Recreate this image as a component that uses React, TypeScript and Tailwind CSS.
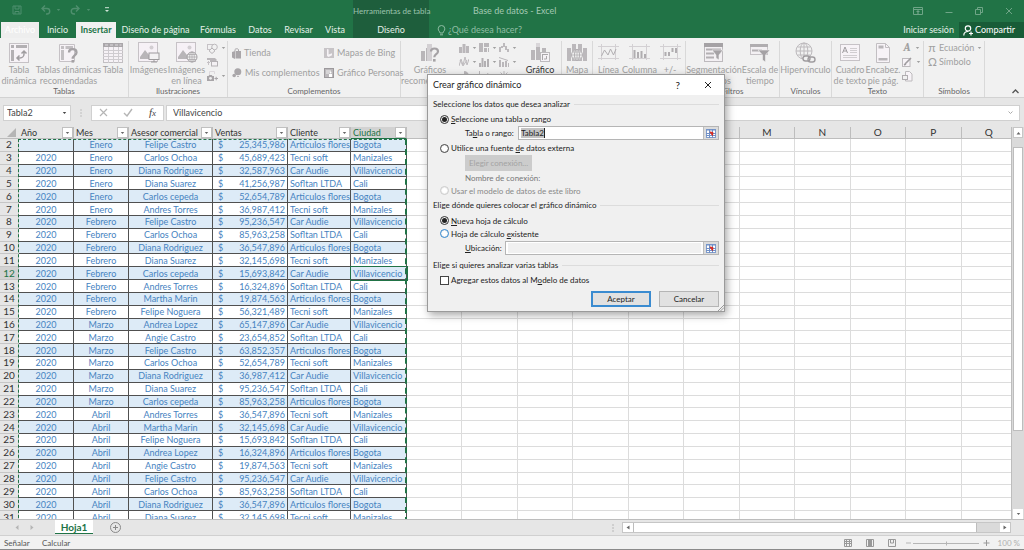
import type { ReactNode } from 'react';
import clsx from 'clsx';

const names = ['Año', 'Mes', 'Asesor comercial', 'Ventas', 'Cliente', 'Ciudad'];

const rows = [
  ['', 'Enero', 'Felipe Castro', '25,345,986', 'Articulos flores', 'Bogota'],
  ['2020', 'Enero', 'Carlos Ochoa', '45,689,423', 'Tecni soft', 'Manizales'],
  ['2020', 'Enero', 'Diana Rodriguez', '32,587,963', 'Car Audie', 'Villavicencio'],
  ['2020', 'Enero', 'Diana Suarez', '41,256,987', 'Sofltan LTDA', 'Cali'],
  ['2020', 'Enero', 'Carlos cepeda', '52,654,789', 'Articulos flores', 'Bogota'],
  ['2020', 'Enero', 'Andres Torres', '36,987,412', 'Tecni soft', 'Manizales'],
  ['2020', 'Febrero', 'Felipe Castro', '95,236,547', 'Car Audie', 'Villavicencio'],
  ['2020', 'Febrero', 'Carlos Ochoa', '85,963,258', 'Sofltan LTDA', 'Cali'],
  ['2020', 'Febrero', 'Diana Rodriguez', '36,547,896', 'Articulos flores', 'Bogota'],
  ['2020', 'Febrero', 'Diana Suarez', '32,145,698', 'Tecni soft', 'Manizales'],
  ['2020', 'Febrero', 'Carlos cepeda', '15,693,842', 'Car Audie', 'Villavicencio'],
  ['2020', 'Febrero', 'Andres Torres', '16,324,896', 'Sofltan LTDA', 'Cali'],
  ['2020', 'Febrero', 'Martha Marin', '19,874,563', 'Articulos flores', 'Bogota'],
  ['2020', 'Febrero', 'Felipe Noguera', '56,321,489', 'Tecni soft', 'Manizales'],
  ['2020', 'Marzo', 'Andrea Lopez', '65,147,896', 'Car Audie', 'Villavicencio'],
  ['2020', 'Marzo', 'Angie Castro', '23,654,852', 'Sofltan LTDA', 'Cali'],
  ['2020', 'Marzo', 'Felipe Castro', '63,852,357', 'Articulos flores', 'Bogota'],
  ['2020', 'Marzo', 'Carlos Ochoa', '52,654,789', 'Tecni soft', 'Manizales'],
  ['2020', 'Marzo', 'Diana Rodriguez', '36,987,412', 'Car Audie', 'Villavicencio'],
  ['2020', 'Marzo', 'Diana Suarez', '95,236,547', 'Sofltan LTDA', 'Cali'],
  ['2020', 'Marzo', 'Carlos cepeda', '85,963,258', 'Articulos flores', 'Bogota'],
  ['2020', 'Abril', 'Andres Torres', '36,547,896', 'Tecni soft', 'Manizales'],
  ['2020', 'Abril', 'Martha Marin', '32,145,698', 'Car Audie', 'Villavicencio'],
  ['2020', 'Abril', 'Felipe Noguera', '15,693,842', 'Sofltan LTDA', 'Cali'],
  ['2020', 'Abril', 'Andrea Lopez', '16,324,896', 'Articulos flores', 'Bogota'],
  ['2020', 'Abril', 'Angie Castro', '19,874,563', 'Tecni soft', 'Manizales'],
  ['2020', 'Abril', 'Felipe Castro', '95,236,547', 'Car Audie', 'Villavicencio'],
  ['2020', 'Abril', 'Carlos Ochoa', '85,963,258', 'Sofltan LTDA', 'Cali'],
  ['2020', 'Abril', 'Diana Rodriguez', '36,547,896', 'Articulos flores', 'Bogota'],
  ['2020', 'Abril', 'Diana Suarez', '32,145,698', 'Tecni soft', 'Manizales'],
];

const extraCols = ['G', 'H', 'I', 'J', 'K', 'L', 'M', 'N', 'O', 'P', 'Q'];

const Svg = ({ w, h, children }: { w: number; h: number; children: ReactNode }) => (
  <svg width={w} height={h} viewBox={`0 0 ${w} ${h}`} fill="none" stroke="currentColor" className="shrink-0" aria-hidden="true">
    {children}
  </svg>
);

const Caret = () => (
  <Svg w={5} h={4}>
    <path d="M0.8 1h3.4L2.5 3z" fill="currentColor" stroke="none" />
  </Svg>
);

/* ---------- ribbon icons ---------- */

const PivotIcon = () => (
  <Svg w={20} h={20}>
    <rect x="0.5" y="0.5" width="19" height="19" fill="#f6f2f6" stroke="#c6c2c6" />
    <path d="M2 2h3v3H2zM7 2h11v3H7zM2 7h3v11H2z" fill="#b3b0b3" stroke="none" />
    <path d="M8.5 15H11a4 4 0 0 0 4-4V8.500M10.500 12.500L8 15l2.500 2.500M12.500 10.500L15 8l2.500 2.500" stroke="#a09da0" strokeWidth="1.500" />
  </Svg>
);

const PivotHelpIcon = () => (
  <Svg w={20} h={20}>
    <path d="M0.500 1.500h15v17h-15z" fill="#f6f2f6" stroke="#c6c2c6" />
    <path d="M2 3h3v3H2zM6.500 3H14v3H6.500zM2 7h3v10H2z" fill="#c2bfc2" stroke="none" />
    <path d="M10 9.500c0-2 1.300-3.300 3.700-3.300s3.800 1.400 3.800 3.200c0 3-3.800 3-3.800 6.300" stroke="#a5a2a5" strokeWidth="2.300" />
    <rect x="12.500" y="17" width="2.600" height="2.600" fill="#a5a2a5" stroke="none" />
  </Svg>
);

const TableIcon = () => (
  <Svg w={20} h={20}>
    <rect x="0.500" y="0.500" width="19" height="19" fill="#f6f2f6" stroke="#c2bfc2" />
    <rect x="0" y="0" width="20" height="4" fill="#aaa7aa" stroke="none" />
    <path d="M2 2h3M7 2h3M12 2h3M16.500 2h2" stroke="#dedbde" />
    <path d="M0 7.500h20M0 10.500h20M0 13.500h20M0 16.500h20M5.500 4v16M10.500 4v16M15.500 4v16" stroke="#cfccd0" />
  </Svg>
);

const PictureBase = () => (
  <>
    <rect x="0.500" y="0.500" width="19" height="19" fill="#f6f1f6" stroke="#c6c2c6" />
    <circle cx="13.500" cy="5.500" r="2" fill="#d2ced2" stroke="none" />
    <path d="M2 15l5-7 4 5 2-2 3 4v2H2z" fill="#b8b5b8" stroke="none" />
  </>
);

const PictureIcon = () => (
  <Svg w={22} h={21}>
    <PictureBase />
    <rect x="11" y="11" width="10" height="6.500" fill="#f3f1f3" stroke="#9d9a9d" />
    <path d="M16 17.500V20M13 20h6" stroke="#9d9a9d" />
  </Svg>
);

const OnlinePictureIcon = () => (
  <Svg w={22} h={21}>
    <PictureBase />
    <circle cx="16" cy="15" r="5" fill="#f1f1f1" stroke="#a5a2a5" />
    <path d="M11 15h10M16 10v10M12 12.500h8M12 17.500h8" stroke="#a5a2a5" strokeWidth="0.700" />
    <ellipse cx="16" cy="15" rx="2.300" ry="5" stroke="#a5a2a5" strokeWidth="0.700" />
  </Svg>
);

const ShapesIcon = () => (
  <Svg w={11} h={11}>
    <rect x="0.500" y="1.500" width="5.500" height="5" stroke="#c6c2c6" />
    <circle cx="7.500" cy="4" r="2.800" fill="#f1f1f1" stroke="#bdbabd" />
    <path d="M5 5l3 2.800L5 10.500 2 7.800z" fill="#f1f1f1" stroke="#b5b2b5" />
  </Svg>
);

const SmartArtIcon = () => (
  <Svg w={11} h={10}>
    <path d="M0 1h8l2 2-2 2H3V3H0z" fill="#bab7ba" stroke="none" />
    <rect x="4.500" y="4.500" width="6" height="4.500" fill="#f4f1f4" stroke="#b5b2b5" />
    <path d="M0 5.500h3M1.500 4v4" stroke="#c6c2c6" />
  </Svg>
);

const ScreenshotIcon = () => (
  <Svg w={11} h={11}>
    <path d="M2.500 4V0.500h5V3" stroke="#ddd9dd" />
    <path d="M0 5h1.500l0.800-1h2.400l0.800 1H7v5H0z" fill="#a8a5a8" stroke="none" />
    <circle cx="3.500" cy="7.300" r="1.400" fill="#eee" stroke="none" />
    <path d="M7.500 7.500h3.500M9.200 5.800v3.500" stroke="#a8a5a8" />
  </Svg>
);

const StoreIcon = () => (
  <Svg w={9} h={11}>
    <path d="M0 4l3-1v8L0 9.500zM3.500 3H9v7.500H3.500z" fill="#a9a6a9" stroke="none" />
    <path d="M3 3V1.500C3.500 0.500 6 0.500 6.500 1.500V3" stroke="#a9a6a9" />
  </Svg>
);

const AddinsIcon = () => (
  <Svg w={10} h={10}>
    <circle cx="5.800" cy="3.700" r="3.500" fill="#a9a6a9" stroke="none" />
    <circle cx="2.200" cy="7.500" r="1.800" fill="#a9a6a9" stroke="none" />
    <path d="M5 8.500h2" stroke="#b9b6b9" />
  </Svg>
);

const BingIcon = () => (
  <Svg w={10} h={10}>
    <rect width="10" height="10" fill="#c7c4c7" stroke="none" />
    <path d="M3 1l1.600 0.600v5L8 5.200v2L4.600 9 3 8z" fill="#f6f3f6" stroke="none" />
  </Svg>
);

const PeopleGraphIcon = () => (
  <Svg w={10} h={10}>
    <rect x="0.500" y="0.500" width="9" height="9" fill="#bbb8bb" stroke="#9c999c" />
    <path d="M2 3h5M2 5h3" stroke="#f1f1f1" />
    <circle cx="6.500" cy="4.500" r="1" fill="#fff" stroke="none" />
    <path d="M5 6h3v3H5z" fill="#fff" stroke="none" />
  </Svg>
);

const ChartHelpIcon = () => (
  <Svg w={20} h={20}>
    <path d="M1 8h4v10H1zM6 5h5v13H6z" fill="#b9b6b9" stroke="none" />
    <path d="M7 1h5v17H7z" fill="#d3d0d3" stroke="none" />
    <path d="M11 8.500c0-2 1.300-3 3.500-3s3.500 1.200 3.500 2.900c0 2.800-3.700 2.800-3.700 5.800" stroke="#a5a2a5" strokeWidth="2.200" />
    <rect x="13" y="16" width="2.600" height="2.600" fill="#a5a2a5" stroke="none" />
  </Svg>
);

const PivotChartIcon = () => (
  <Svg w={21} h={21}>
    <path d="M1 8h4v10H1zM6 5h4v13H6zM12 6h4v5h-4z" fill="#b9b6b9" stroke="none" />
    <path d="M6 1h4v4H6z" fill="#d9d6d9" stroke="none" />
    <rect x="10.500" y="10.500" width="9" height="9" fill="#f6f2f6" stroke="#bdbabd" />
    <path d="M12 12.500h6M12.500 12v6" stroke="#aaa7aa" />
    <path d="M14 17h2.500v-3" stroke="#aaa7aa" />
  </Svg>
);

const MapIcon = () => (
  <Svg w={20} h={20}>
    <path d="M0 5h4v13H0zM5 1h4v17H5zM11 1h4v17h-4zM16 5h4v13h-4z" fill="#bbb8bb" stroke="none" />
    <circle cx="10" cy="12" r="5.500" fill="#f1f1f1" stroke="#b3b0b3" />
    <ellipse cx="10" cy="12" rx="2.500" ry="5.500" stroke="#b3b0b3" />
    <path d="M4.500 12h11M10 6.500v11M5.500 9h9M5.500 15h9" stroke="#b3b0b3" strokeWidth="0.800" />
  </Svg>
);

const Spark = ({ children }: { children: ReactNode }) => (
  <Svg w={21} h={18}>
    <path d="M3.500 0v16M17.500 0v16M0 2.500h21M0 14.500h21" stroke="#d3d0d3" />
    {children}
  </Svg>
);

const SparkLineIcon = () => (
  <Spark>
    <path d="M3.500 12l3-6 3.500 5 2.500-6 3 6 2.500-6" stroke="#b0adb0" />
  </Spark>
);

const SparkColIcon = () => (
  <Spark>
    <path d="M4.500 6h2v8h-2zM8 8h2v6H8zM11.500 7h2v7h-2zM15 10h2v4h-2z" fill="#b0adb0" stroke="none" />
  </Spark>
);

const SparkWinIcon = () => (
  <Spark>
    <path d="M4.500 8h2v4h-2zM8 8h2v4H8zM11.500 4h2v4h-2zM15 4h2v5h-2z" fill="#b0adb0" stroke="none" />
  </Spark>
);

const SlicerIcon = () => (
  <Svg w={20} h={20}>
    <rect x="0.500" y="0.500" width="18" height="18" fill="#f3f0f3" stroke="#bdbabd" />
    <path d="M0 0h19v4H0z" fill="#a5a2a5" stroke="none" />
    <path d="M2 6.500h15M2 10.500h8M2 14.500h8" stroke="#b3b0b3" strokeWidth="2" />
    <path d="M8 7h11l-4 5v5l-3-2v-3z" fill="#a5a2a5" stroke="#f1f1f1" strokeWidth="0.600" />
  </Svg>
);

const TimelineIcon = () => (
  <Svg w={20} h={18}>
    <rect x="0.500" y="0.500" width="17" height="10" fill="#f3f0f3" stroke="#c6c2c6" />
    <path d="M0 0h18v3H0z" fill="#b0adb0" stroke="none" />
    <path d="M2 6.500h10" stroke="#b3b0b3" strokeWidth="2" />
    <path d="M8 6h12l-4.500 5v7l-3-2v-5z" fill="#a5a2a5" stroke="#f1f1f1" strokeWidth="0.600" />
  </Svg>
);

const LinkIcon = () => (
  <Svg w={21} h={21}>
    <circle cx="9" cy="9" r="8" stroke="#bdbabd" />
    <ellipse cx="9" cy="9" rx="3.800" ry="8" stroke="#bdbabd" />
    <path d="M1 9h16M9 1v16M2.500 5h13M2.500 13h13" stroke="#bdbabd" />
    <rect x="8" y="14" width="7" height="5" rx="2.500" fill="#f1f1f1" stroke="#a09da0" strokeWidth="1.400" />
    <rect x="13" y="15" width="7" height="5" rx="2.500" stroke="#a09da0" strokeWidth="1.400" />
  </Svg>
);

const TextBoxIcon = () => (
  <Svg w={20} h={19}>
    <rect x="0.500" y="1.500" width="19" height="16" fill="#f7f3f7" stroke="#c6c2c6" />
    <path d="M2.500 10L5 4l2.500 6M3.300 8h3.400" stroke="#a09da0" />
    <path d="M10 5.500h7M10 7.500h7M10 9.500h7M3 12.500h14M3 14.500h14" stroke="#d0cdd0" />
  </Svg>
);

const HeaderFooterIcon = () => (
  <Svg w={14} h={20}>
    <path d="M0.500 0.500h9l4 4v15H0.500z" fill="#f7f3f7" stroke="#c2bfc2" />
    <path d="M9.500 0.500v4h4" stroke="#c2bfc2" />
    <path d="M2.500 2.500h5v3h-5zM2.500 15h9v2.500h-9z" fill="#b9b6b9" stroke="none" />
  </Svg>
);

const SignatureIcon = () => (
  <Svg w={11} h={10}>
    <rect x="0.500" y="1.500" width="7.500" height="8" fill="#f7f3f7" stroke="#bdbabd" />
    <path d="M3 7l6-6M2 8l2-1" stroke="#a09da0" strokeWidth="1.600" />
  </Svg>
);

const ObjectIcon = () => (
  <Svg w={11} h={11}>
    <path d="M3.500 0.500h4l2.500 2.500v7H3.500z" fill="#f7f3f7" stroke="#bdbabd" />
    <rect x="0.500" y="4.500" width="5" height="4" fill="#f1f1f1" stroke="#b0adb0" />
  </Svg>
);

const miniCharts: ReactNode[] = [
  <path d="M0 4h3v6H0zM3.500 1h3v9h-3zM7 3h3v7H7z" fill="#bab7ba" stroke="none" />,
  <path d="M0 0h4v9H0zM5 0h5v4H5zM5 5h3v4H5zM9 5h1v4H9z" fill="#bab7ba" stroke="none" />,
  <path d="M0 4h2v5H0zM2 3h2v2H2zM4 0h2v4H4zM6 3h2v4H6zM8 6h2v3H8z" fill="#bdbabd" stroke="none" />,
  <path d="M0 9l2-7 2 6 2-8 2 8 2-6M1 3l3 6 4-6" stroke="#bdbabd" />,
  <path d="M0 6h2v4H0zM2.500 1h2v9h-2zM5 4h2v6H5zM8 2h2v8H8z" fill="#b3b0b3" stroke="none" />,
  <path d="M0 3h2v7H0zM3 5h2v5H3zM6 4h2v6H6zM9 6h1v4H9zM0 0l9 3v1L0 1z" fill="#bab7ba" stroke="none" />,
  <path d="M5 5V0a5 5 0 1 1-5 5z" fill="#bab7ba" stroke="none" />,
  <path d="M0.500 0v9.500H10M3 7l2-3 2 2 2-4" stroke="#bdbabd" />,
  <path d="M5 0v10M0 5h10M1.500 1.500l7 7M8.500 1.500l-7 7" stroke="#bdbabd" />,
];

/* ---------- ribbon ---------- */

const BigButton = ({ icon, lines, className }: { icon: ReactNode; lines: string[]; className: string }) => (
  <button type="button" className={clsx('flex shrink-0 flex-col items-center text-[#a0a0a0]', className)}>
    <span className="flex h-[23px] items-center">{icon}</span>
    {lines.map((l) => (
      <span key={l} className="h-[11px] whitespace-nowrap leading-[11px]">{l}</span>
    ))}
  </button>
);

const SmallButton = ({ icon, label, caret }: { icon: ReactNode; label?: string; caret?: boolean }) => (
  <button type="button" aria-label={label ?? 'Opciones'} className="flex h-[14px] items-center gap-[3px] whitespace-nowrap text-[#a0a0a0]">
    {icon}
    {label}
    {caret && <Caret />}
  </button>
);

const Group = ({ title, className, children }: { title: string; className: string; children: ReactNode }) => (
  <div className={clsx('flex shrink-0 flex-col justify-between border-r border-[#d9d9d9]', className)}>
    <div className="flex h-[45px]">{children}</div>
    <div className="h-[11px] text-center text-[8px] leading-[11px] text-[#666]">{title}</div>
  </div>
);

const Ribbon = () => (
  <section className="flex h-[60px] shrink-0 overflow-hidden border-b border-[#d2d2d2] bg-[#f1f1f1] pt-[3px] text-[9px]">
    <Group title="Tablas" className="w-[129px]">
      <BigButton icon={<PivotIcon />} lines={['Tabla', 'dinámica']} className="w-[38px]" />
      <BigButton icon={<PivotHelpIcon />} lines={['Tablas dinámicas', 'recomendadas']} className="w-[61px]" />
      <BigButton icon={<TableIcon />} lines={['Tabla']} className="w-[28px]" />
    </Group>
    <Group title="Ilustraciones" className="w-[99px]">
      <BigButton icon={<PictureIcon />} lines={['Imágenes']} className="w-[39px]" />
      <BigButton icon={<OnlinePictureIcon />} lines={['Imágenes', 'en línea']} className="w-[37px]" />
      <div className="flex flex-col pl-[2px]">
        <SmallButton icon={<ShapesIcon />} caret />
        <SmallButton icon={<SmartArtIcon />} />
        <SmallButton icon={<ScreenshotIcon />} caret />
      </div>
    </Group>
    <Group title="Complementos" className="w-[173px]">
      <div className="flex w-[92px] flex-col gap-[6px] pt-[5px] pl-1">
        <SmallButton icon={<StoreIcon />} label="Tienda" />
        <SmallButton icon={<AddinsIcon />} label="Mis complementos" caret />
      </div>
      <div className="flex flex-col gap-[6px] pt-[5px] pl-[4px]">
        <SmallButton icon={<BingIcon />} label="Mapas de Bing" />
        <SmallButton icon={<PeopleGraphIcon />} label="Gráfico Personas" />
      </div>
    </Group>
    <Group title="Gráficos" className="w-[161px]">
      <BigButton icon={<ChartHelpIcon />} lines={['Gráficos', 'recomendados']} className="w-[58px]" />
      <div className="grid grid-cols-3 content-start gap-x-[2px]">
        {miniCharts.map((c, i) => (
          <SmallButton key={i} icon={<Svg w={10} h={10}>{c}</Svg>} caret />
        ))}
      </div>
      <button type="button" className="ml-1 flex w-[38px] flex-col items-center text-[#333]">
        <span className="flex h-[23px] items-center"><PivotChartIcon /></span>
        <span className="leading-[11px]">Gráfico</span>
      </button>
    </Group>
    <Group title="" className="w-[31px]">
      <BigButton icon={<MapIcon />} lines={['Mapa']} className="w-[30px]" />
    </Group>
    <Group title="Minigráficos" className="w-[93px]">
      <BigButton icon={<SparkLineIcon />} lines={['Línea']} className="w-[31px]" />
      <BigButton icon={<SparkColIcon />} lines={['Columna']} className="w-[31px]" />
      <BigButton icon={<SparkWinIcon />} lines={['+/-']} className="w-[30px]" />
    </Group>
    <Group title="Filtros" className="w-[94px]">
      <BigButton icon={<SlicerIcon />} lines={['Segmentación', 'de datos']} className="w-[56px]" />
      <BigButton icon={<TimelineIcon />} lines={['Escala de', 'tiempo']} className="w-[36px]" />
    </Group>
    <Group title="Vínculos" className="w-[52px]">
      <BigButton icon={<LinkIcon />} lines={['Hipervínculo']} className="w-[51px]" />
    </Group>
    <Group title="Texto" className="w-[92px]">
      <BigButton icon={<TextBoxIcon />} lines={['Cuadro', 'de texto']} className="w-[36px]" />
      <BigButton icon={<HeaderFooterIcon />} lines={['Encabez.', 'pie pág.']} className="w-[30px]" />
      <div className="flex flex-col pl-1">
        <SmallButton icon={<span className="w-[10px] font-serif text-[11px] font-bold italic">A</span>} caret />
        <SmallButton icon={<SignatureIcon />} caret />
        <SmallButton icon={<ObjectIcon />} />
      </div>
    </Group>
    <Group title="Símbolos" className="w-[61px]">
      <div className="flex flex-col pl-1">
        <SmallButton icon={<span className="w-2 text-[12px]">π</span>} label="Ecuación" caret />
        <SmallButton icon={<span className="w-2 text-[11px]">Ω</span>} label="Símbolo" />
      </div>
    </Group>
    <div className="flex flex-1 items-end justify-end pr-1 pb-[3px] text-[#555]">
      <button type="button" aria-label="Contraer la cinta">
        <Svg w={9} h={5}><path d="M1.500 4l3-3 3 3" strokeWidth="1.300" /></Svg>
      </button>
    </div>
  </section>
);

/* ---------- title bar and tabs ---------- */

const Tab = ({ label, className }: { label: string; className: string }) => (
  <button type="button" className={clsx('h-4 shrink-0 whitespace-nowrap text-center', className)}>{label}</button>
);

const Header = () => (
  <header className="flex h-[38px] shrink-0 bg-[#217346] text-[9px] text-[#e4f0e8]">
    <div className="flex w-[353px] shrink-0 flex-col justify-between">
      <div className="flex h-5 items-center text-[#4f8f6e]">
        <button type="button" aria-label="Guardar" className="ml-3">
          <Svg w={10} h={10}><path d="M1 1h8v8H1zM3 1v3h4V1M3 9V6.500h4V9" /></Svg>
        </button>
        <button type="button" aria-label="Deshacer" className="ml-[19px] flex items-center gap-[5px]">
          <Svg w={10} h={10}><path d="M4 0.500L1 3.500l3 3M1 3.500h5a2.700 2.700 0 0 1 0 5.500H5" strokeWidth="1.400" /></Svg>
          <Caret />
        </button>
        <button type="button" aria-label="Rehacer" className="ml-[9px] flex items-center gap-[6px]">
          <Svg w={10} h={10}><path d="M6 0.500l3 3-3 3M9 3.500H4A2.700 2.700 0 0 0 4 9h1" strokeWidth="1.400" /></Svg>
          <Caret />
        </button>
        <button type="button" aria-label="Personalizar" className="ml-[13px] text-[#cfe3d7]">
          <Svg w={6} h={6}><path d="M1 0.700h4" /><path d="M1 3h4L3 5z" fill="currentColor" stroke="none" /></Svg>
        </button>
      </div>
      <nav className="flex items-end">
        <Tab label="Archivo" className="ml-px w-[38px] bg-[#eeeeee] text-white" />
        <Tab label="Inicio" className="w-[37px]" />
        <Tab label="Insertar" className="w-[40px] bg-[#f1f1f1] font-bold text-[#217346]" />
        <Tab label="Diseño de página" className="w-[79px]" />
        <Tab label="Fórmulas" className="w-[46px]" />
        <Tab label="Datos" className="w-[38px]" />
        <Tab label="Revisar" className="w-[39px]" />
        <Tab label="Vista" className="w-[34px]" />
      </nav>
    </div>
    <div className="flex w-[76px] shrink-0 flex-col justify-between bg-[#1e5e3c] text-center">
      <div className="h-[22px] whitespace-nowrap text-[8px] leading-[23px] text-[#9cc3ad]">Herramientas de tabla</div>
      <Tab label="Diseño" className="w-full" />
    </div>
    <div className="flex flex-1 flex-col justify-between">
      <div className="flex h-[22px] items-center justify-between pr-[11px] pl-11 text-[#a3c9b3]">
        <h1>Base de datos - Excel</h1>
        <div className="flex items-center gap-[22px] text-[#6fa587]">
          <button type="button" aria-label="Opciones de cinta">
            <Svg w={10} h={8}><path d="M0.500 0.500h9v7h-9zM1 2.500h8" /><path d="M5 3l2 2H5.600v2H4.400V5H3z" fill="currentColor" stroke="none" /></Svg>
          </button>
          <button type="button" aria-label="Minimizar"><Svg w={8} h={8}><path d="M0.500 5.500h7" /></Svg></button>
          <button type="button" aria-label="Restaurar"><Svg w={8} h={8}><path d="M0.500 2.500h5v5h-5zM2.500 2V0.500h5v5H6" /></Svg></button>
          <button type="button" aria-label="Cerrar"><Svg w={8} h={8}><path d="M1 1l6 6M7 1L1 7" /></Svg></button>
        </div>
      </div>
      <div className="flex items-center justify-between pl-2">
        <label className="flex items-center gap-[2px] text-[#8fbda3]">
          <Svg w={9} h={11}><path d="M3 8C3 6.500 1.200 6 1.200 3.800a3.300 3.300 0 0 1 6.600 0C7.800 6 6 6.500 6 8zM3 9.800h3" /></Svg>
          <input aria-label="¿Qué desea hacer?" placeholder="¿Qué desea hacer?" className="w-24 bg-transparent outline-none placeholder:text-[#8fbda3]" />
        </label>
        <div className="flex items-center gap-[5px]">
          <button type="button">Iniciar sesión</button>
          <button type="button" className="flex h-4 w-[65px] items-center gap-[2px] bg-[#185c37] pl-1 text-white">
            <Svg w={10} h={11}><circle cx="5" cy="3.500" r="2.700" strokeWidth="1.200" /><path d="M0.800 10.500c0-3 2-4 4.200-4M6 8.500h4M8 6.500v4" strokeWidth="1.200" /></Svg>
            Compartir
          </button>
        </div>
      </div>
    </div>
  </header>
);

/* ---------- formula bar ---------- */

const FormulaBar = () => (
  <section className="flex h-[29px] shrink-0 items-center pr-1 pl-[3px] text-[9px] text-[#444]">
    <div className="flex h-4 w-[68px] items-center justify-between border border-[#d0d0d0] bg-white px-[3px]">
      <input aria-label="Cuadro de nombres" defaultValue="Tabla2" className="w-12 outline-none" />
      <button type="button" aria-label="Nombres"><Caret /></button>
    </div>
    <div className="flex w-5 justify-center text-[#999]">
      <Svg w={2} h={8}><path d="M1 0.500v7" strokeDasharray="1 2" /></Svg>
    </div>
    <div className="flex h-4 w-[73px] items-center justify-between border border-[#d0d0d0] bg-white px-[7px]">
      <button type="button" aria-label="Cancelar entrada" className="text-[#b5b5b5]"><Svg w={9} h={9}><path d="M1 1l7 7M8 1L1 8" strokeWidth="1.200" /></Svg></button>
      <button type="button" aria-label="Introducir" className="text-[#b5b5b5]"><Svg w={10} h={9}><path d="M1 5l3 3 5-7" strokeWidth="1.400" /></Svg></button>
      <button type="button" aria-label="Insertar función" className="font-['Liberation_Serif',serif] text-[11px] italic">
        f<span className="text-[9px]">x</span>
      </button>
    </div>
    <div className="ml-[2px] flex h-4 flex-1 items-center justify-between border border-[#d0d0d0] bg-white px-[6px]">
      <input aria-label="Barra de fórmulas" defaultValue="Villavicencio" className="flex-1 outline-none" />
      <Svg w={5} h={4}><path d="M0.500 0.500l2 2 2-2" stroke="#aaa" /></Svg>
    </div>
  </section>
);

/* ---------- worksheet ---------- */

const Sheet = () => (
  <div className="relative min-w-0 flex-1 overflow-hidden border-r border-[#bdbdbd] bg-white">
    <table className="h-[397px] w-[1017px] table-fixed border-separate border-spacing-0 text-[9px] leading-[11px] text-[#4683c1]">
      <colgroup>
        <col className="w-[19px]" />
        <col className="w-[55px]" />
        <col className="w-[55px]" />
        <col className="w-[84px]" />
        <col className="w-[75px]" />
        <col className="w-[63px]" />
        <col className="w-[56px]" />
        {extraCols.map((c) => <col key={c} />)}
      </colgroup>
      <thead>
        <tr className="h-3 bg-[#e6e6e6] text-[10px] text-[#333]">
          <th aria-label="Seleccionar todo" className="border-b border-[#bdbdbd] p-0">
            <span className="flex justify-end pr-[3px] text-[#b5b5b5]"><Svg w={9} h={9}><path d="M9 0v9H0z" fill="currentColor" stroke="none" /></Svg></span>
          </th>
          {names.map((n) => (
            <th key={n} className={clsx('border-r border-b p-0 text-left text-[9px] font-normal', n === 'Ciudad' ? 'border-[#217346] border-r-[#bdbdbd] bg-[#d2d2d2] text-[#217346]' : 'border-[#bdbdbd]')}>
              <span className="flex h-[11px] items-center justify-between pl-[2px]">
                <span className="whitespace-nowrap">{n}</span>
                <button type="button" aria-label={`Filtrar ${n}`} className="flex h-[11px] w-[11px] shrink-0 items-center justify-center border border-[#c0c0c0] bg-white text-[#666]"><Caret /></button>
              </span>
            </th>
          ))}
          {extraCols.map((c) => (
            <th key={c} className="border-r border-b border-[#bdbdbd] p-0 text-center font-normal">{c}</th>
          ))}
        </tr>
      </thead>
      <tbody>
        {rows.map((r, i) => (
          <tr key={i} className="h-3">
            <th className={clsx('border-r border-b border-[#c6c6c6] p-0 text-center text-[10px] font-normal', i === 10 ? 'bg-[#d2d2d2] text-[#217346]' : 'bg-[#e6e6e6] text-[#333]')}>{i + 2}</th>
            {r.map((v, j) => (
              <td
                key={j}
                className={clsx(
                  'whitespace-nowrap border-r border-b border-[#505050] px-[2px] py-0',
                  j < 3 && 'text-center',
                  i % 2 === 0 && 'bg-[#ddebf7]',
                  i === 10 && j === 5 && 'outline outline-[#217346]',
                )}
              >
                {j === 3 ? <span className="flex justify-between pl-[3px]"><span>$</span><span>{v}</span></span> : v}
              </td>
            ))}
            {extraCols.map((c) => <td key={c} className="border-r border-b border-[#dcdcdc] p-0" />)}
          </tr>
        ))}
      </tbody>
    </table>
    {/* copy marquee round the source table */}
    <div className="pointer-events-none absolute top-3 -bottom-1 left-[18px] w-[389px] border border-r-2 border-dashed border-[#217346]" />
  </div>
);

const VScroll = () => (
  <div className="flex w-3 shrink-0 flex-col bg-[#dadada] px-px text-[#666]">
    <button type="button" aria-label="Arriba" className="flex h-[11px] items-center justify-center border border-[#c6c6c6] bg-white"><Svg w={5} h={4}><path d="M0.500 3.500h4L2.500 1z" fill="currentColor" stroke="none" /></Svg></button>
    <div className="mt-[9px] h-[284px] border border-[#bdbdbd] bg-white" />
    <button type="button" aria-label="Abajo" className="mt-auto flex h-[10px] items-center justify-center bg-white"><Caret /></button>
  </div>
);

const SheetTabs = () => (
  <div className="flex h-4 shrink-0 items-start border-t border-[#bdbdbd] text-[#888]">
    <div className="flex w-[55px] items-center gap-[11px] pt-[5px] pl-[15px] text-[#b5b5b5]">
      <Svg w={4} h={5}><path d="M3.500 0v5L0.500 2.500z" fill="currentColor" stroke="none" /></Svg>
      <Svg w={4} h={5}><path d="M0.500 0v5l3-2.500z" fill="currentColor" stroke="none" /></Svg>
    </div>
    <button type="button" className="h-[14px] w-[38px] border-b border-[#217346] bg-white text-[10px] leading-3 font-bold text-[#217346]">Hoja1</button>
    <button type="button" aria-label="Hoja nueva" className="mt-[2px] ml-[17px]">
      <Svg w={11} h={11}><circle cx="5.500" cy="5.500" r="5" /><path d="M3 5.500h5M5.500 3v5" /></Svg>
    </button>
    <div className="ml-auto flex items-center pt-[2px] pr-[13px]">
      <Svg w={2} h={8}><path d="M1 0.500v7" strokeDasharray="1 2" /></Svg>
      <div className="ml-2 flex h-[11px] w-[389px] border border-[#c6c6c6] bg-[#dadada]">
        <button type="button" aria-label="Izquierda" className="flex w-[10px] items-center justify-center bg-white text-[#666]"><Svg w={4} h={5}><path d="M3.500 0.500v4l-3-2z" fill="currentColor" stroke="none" /></Svg></button>
        <div className="w-[344px] border-x border-[#bdbdbd] bg-white" />
        <button type="button" aria-label="Derecha" className="ml-auto flex w-[10px] items-center justify-center bg-white text-[#666]"><Svg w={4} h={5}><path d="M0.500 0.500v4l3-2z" fill="currentColor" stroke="none" /></Svg></button>
      </div>
    </div>
  </div>
);

const StatusBar = () => (
  <footer className="flex h-[15px] shrink-0 items-center border-t border-b border-t-[#d0d0d0] border-b-[#8a8a8a] bg-[#f1f1f1] pr-1 pl-1 text-[8px] text-[#555]">
    <span className="w-[38px]">Señalar</span>
    <span>Calcular</span>
    <div className="ml-auto flex items-center text-[#999]">
      <Svg w={8} h={8}><path d="M0.500 0.500h7v7h-7zM0 2.500h8M0 4.500h8M2.500 0v8M5.500 0v8" /></Svg>
      <span className="w-[14px]" />
      <Svg w={8} h={8}><path d="M0.500 0.500h7v7h-7z" /><path d="M2 1h4v6H2z" fill="currentColor" stroke="none" /></Svg>
      <span className="w-[14px]" />
      <Svg w={8} h={8}><path d="M0.500 0.500h7v7h-7zM2.500 0v4M5.500 0v4H2.500" /></Svg>
      <span className="w-[10px]" />
      <Svg w={77} h={8}><path d="M0 4h5M7 4.500h66M40.500 2.500v4" stroke="#b5b5b5" /></Svg>
      <Svg w={7} h={8}><path d="M0.500 4h6M3.500 1v6" /></Svg>
      <span className="ml-2 text-[#b0b0b0]">100 %</span>
    </div>
  </footer>
);

/* ---------- dialog ---------- */

const Section = ({ children }: { children: ReactNode }) => (
  <div className="flex h-[18px] items-center gap-1">
    <span>{children}</span>
    <span className="h-px flex-1 bg-[#dcdcdc]" />
  </div>
);

const radioClass =
  'h-[9px] w-[9px] shrink-0 appearance-none rounded-full border bg-white bg-clip-content p-px checked:bg-[#222]';

const RangeButton = () => (
  <button type="button" aria-label="Contraer diálogo" className="flex h-full w-[15px] items-center justify-center border-l border-[#bdbdbd] bg-[#dcdcdc]">
    <Svg w={10} h={9}>
      <rect x="0.500" y="0.500" width="9" height="8" fill="#fff" stroke="#7f9ccc" />
      <path d="M0 1h10M0 4.500h10M0 6.500h10M3.500 0v9M6.500 0v9" stroke="#6f8fc6" />
      <path d="M4 3l3 0.500-0.500 3z" fill="#d6281e" stroke="#d6281e" />
    </Svg>
  </button>
);

const Dialog = () => (
  <div role="dialog" aria-label="Crear gráfico dinámico" className="absolute top-[74px] left-[427px] w-[298px] border border-[#9a9a9a] bg-[#f0f0f0] text-[8px] leading-[10px] whitespace-nowrap text-[#222] shadow-[2px_3px_8px_rgba(0,0,0,0.35)]">
    <div className="flex h-5 items-center bg-white pr-3 pl-[5px] text-[9px]">
      <h2 className="flex-1">Crear gráfico dinámico</h2>
      <button type="button" aria-label="Ayuda" className="mr-6 text-[10px]">?</button>
      <button type="button" aria-label="Cerrar"><Svg w={8} h={8}><path d="M1 1l6 6M7 1L1 7" /></Svg></button>
    </div>
    <form className="px-[5px] pb-1">
      <Section>Seleccione los datos que desea analizar</Section>
      <label className="flex h-3 items-center gap-[2px] pl-[7px]">
        <input type="radio" name="origen" defaultChecked className={clsx(radioClass, 'border-[#333]')} />
        <span><u>S</u>eleccione una tabla o rango</span>
      </label>
      <div className="flex h-4 items-center pl-8">
        <label htmlFor="rango" className="w-[53px]">Ta<u>b</u>la o rango:</label>
        <div className="flex h-[14px] flex-1 border border-[#b5b5b5] bg-white">
          <div className="flex flex-1 items-center pl-[2px]">
            <input id="rango" defaultValue="Tabla2" className="w-6 border-r border-[#222] bg-[#c4c4c4] outline-none" />
          </div>
          <RangeButton />
        </div>
      </div>
      <label className="flex h-[14px] items-center gap-[2px] pl-[7px]">
        <input type="radio" name="origen" className={clsx(radioClass, 'border-[#444]')} />
        <span>Utilice una fuente <u>d</u>e datos externa</span>
      </label>
      <div className="pl-8">
        <button type="button" disabled className="h-4 w-[67px] bg-[#cccccc] text-[#a3a3a3]">Elegir conexión...</button>
      </div>
      <div className="h-[14px] pl-8 leading-[14px] text-[#777]">Nombre de conexión:</div>
      <label className="flex h-[11px] items-center gap-[2px] pl-[7px] text-[#888]">
        <input type="radio" name="origen" disabled className={clsx(radioClass, 'border-[#ccc]')} />
        <span>Usar el modelo de datos de este libro</span>
      </label>
      <Section>Elige dónde quieres colocar el gráfico dinámico</Section>
      <label className="flex h-[13px] items-center gap-[2px] pl-[7px]">
        <input type="radio" name="destino" defaultChecked className={clsx(radioClass, 'border-[#333]')} />
        <span><u>N</u>ueva hoja de cálculo</span>
      </label>
      <label className="flex h-[13px] items-center gap-[2px] pl-[7px]">
        <input type="radio" name="destino" className={clsx(radioClass, 'border-[#2f86cf]')} />
        <span>Hoja de cálculo <u>e</u>xistente</span>
      </label>
      <div className="flex h-4 items-center pl-8">
        <label htmlFor="ubicacion" className="w-10"><u>U</u>bicación:</label>
        <div className="flex h-[14px] flex-1 border border-[#b5b5b5] bg-white">
          <input id="ubicacion" className="my-px mr-[2px] ml-[2px] min-w-0 flex-1 bg-[#f0f0f0] outline-none" />
          <RangeButton />
        </div>
      </div>
      <Section>Elige si quieres analizar varias tablas</Section>
      <label className="flex h-3 items-center gap-[2px] pl-[7px]">
        <input type="checkbox" className="h-[9px] w-[9px] appearance-none border border-[#444] bg-white" />
        <span>Agregar estos datos al M<u>o</u>delo de datos</span>
      </label>
      <div className="mt-[5px] flex justify-end gap-2">
        <button type="submit" className="h-4 w-[60px] border-2 border-[#3a8bd0] bg-[#e1e1e1] leading-3">Aceptar</button>
        <button type="button" className="h-4 w-[60px] border border-[#b5b5b5] bg-[#e1e1e1]">Cancelar</button>
      </div>
    </form>
    <div className="absolute right-0 bottom-0 text-[#999]">
      <Svg w={6} h={6}><path d="M0 6l6-6M2.500 6L6 2.500" /></Svg>
    </div>
  </div>
);

const App = () => (
  <div className="relative flex h-screen flex-col overflow-hidden bg-[#e6e6e6] font-['Lato','Open_Sans',sans-serif]">
    <Header />
    <Ribbon />
    <FormulaBar />
    <main className="flex min-h-0 flex-1">
      <Sheet />
      <VScroll />
    </main>
    <SheetTabs />
    <StatusBar />
    <Dialog />
  </div>
);

export default App;
